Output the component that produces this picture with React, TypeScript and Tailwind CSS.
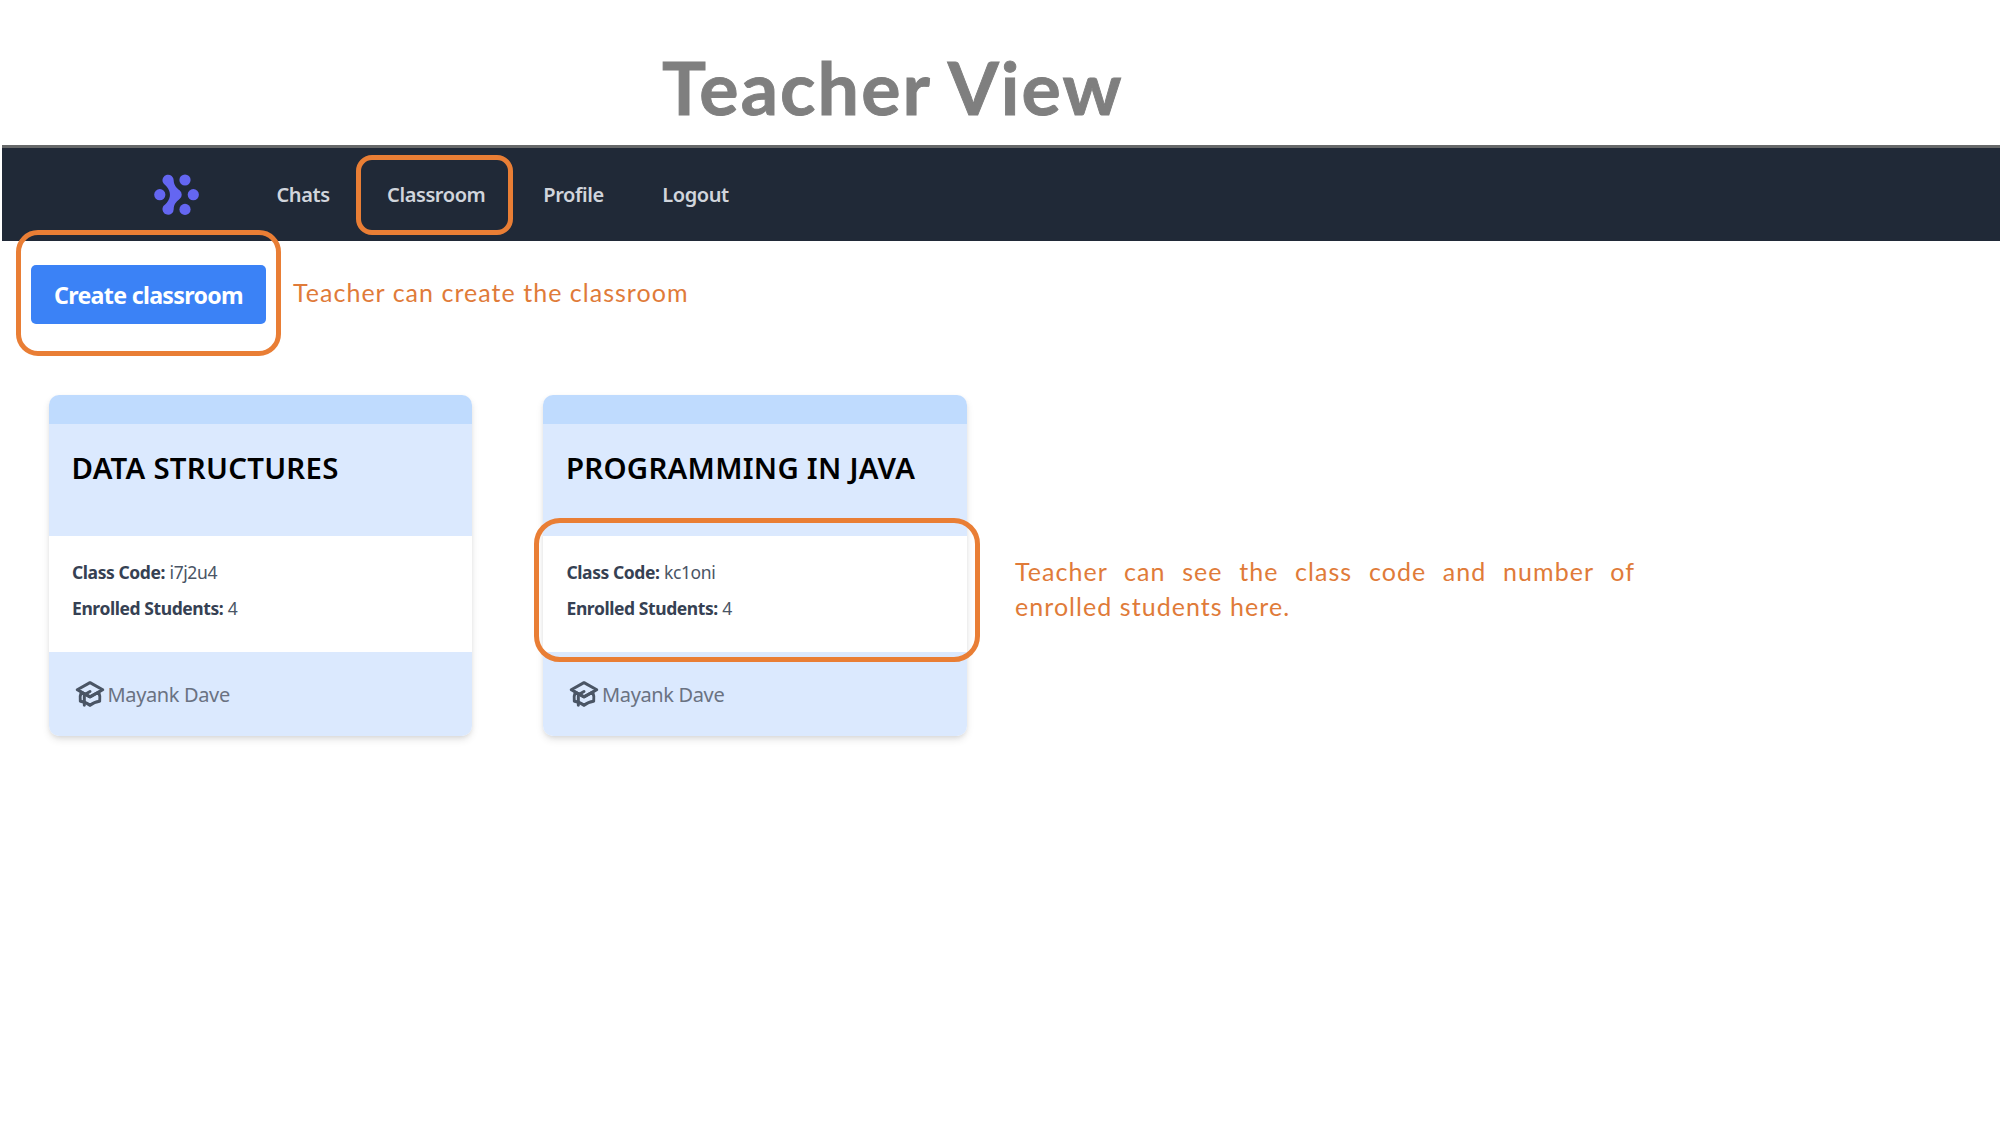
import type { ReactNode } from "react";

function Highlight({ className }: { className: string }) {
  return (
    <span
      aria-hidden="true"
      className={`pointer-events-none absolute z-10 border-5 border-[#e97e35] ${className}`}
    />
  );
}

function Logo() {
  return (
    <svg viewBox="0 0 46 42" className="h-[42px] w-[46px] shrink-0 text-[#6466f1]" fill="currentColor">
      <circle cx="5.8" cy="20.7" r="5.6" />
      <circle cx="39.3" cy="20.7" r="5.6" />
      <circle cx="31" cy="6" r="5.6" />
      <circle cx="31" cy="35.4" r="5.6" />
      <path d="M9 8.6A5.6 5.6 0 1 1 19.7 6.4C19.9 10.5 21.6 13.2 25.6 16.3A5.6 5.6 0 0 1 25.6 25.1C21.6 28.2 19.9 30.9 19.7 35A5.6 5.6 0 1 1 9 32.8C9.6 31.4 11.3 30.5 12.8 28.7C17 23.8 17 17.6 12.8 12.7C11.3 10.9 9.6 10 9 8.6Z" />
    </svg>
  );
}

function AcademicCap() {
  return (
    <svg
      viewBox="0 0 24 24"
      fill="none"
      stroke="currentColor"
      strokeWidth="2.1"
      strokeLinecap="round"
      strokeLinejoin="round"
      className="size-[34px] shrink-0 text-gray-600"
    >
      <path d="M12 14l9-5-9-5-9 5 9 5z" />
      <path d="M12 14l6.16-3.422a12.083 12.083 0 01.665 6.479A11.952 11.952 0 0012 20.055a11.952 11.952 0 00-6.824-2.998 12.078 12.078 0 01.665-6.479L12 14z" />
      <path d="M8 20v-7.5l4-2.222" />
    </svg>
  );
}

function ClassCard({ name, code, students, teacher, children }: {
  name: string;
  code: string;
  students: number;
  teacher: string;
  children?: ReactNode;
}) {
  return (
    <article className="relative h-[341px] w-[423.5px] shrink-0">
      <div className="flex h-full flex-col overflow-hidden rounded-[10px] bg-white shadow-[0_4px_8px_-1px_rgba(0,0,0,0.12),0_2px_5px_-1px_rgba(0,0,0,0.08)]">
        <div className="h-[29px] bg-[#bfdbfe]" />
        <div className="h-[112px] bg-[#dbe9fe] px-[23px] pt-[24px]">
          <h2 className="text-[29.4px] leading-[40px] font-semibold tracking-[0.25px] whitespace-nowrap text-black">
            {name}
          </h2>
        </div>
        <div className="h-[116px] px-[23.5px] pt-[18px] text-[17.5px] leading-[36px] text-gray-600">
          <p>
            <span className="font-bold tracking-[-0.42px] text-gray-700">Class Code:</span>
            <span className="ml-[4.5px] tracking-[-0.4px]">{code}</span>
          </p>
          <p>
            <span className="font-bold tracking-[-0.42px] text-gray-700">Enrolled Students:</span>
            <span className="ml-[4.5px]">{students}</span>
          </p>
        </div>
        <div className="flex flex-1 items-center bg-[#dbe9fe] pl-[24px] text-[20px] tracking-[-0.36px] text-gray-500">
          <AcademicCap />
          <span className="ml-px pt-[2px]">{teacher}</span>
        </div>
      </div>
      {children}
    </article>
  );
}

export default function App() {
  return (
    <div className="h-[1125px] w-[2000px] overflow-hidden bg-white font-['Noto_Sans',sans-serif]">
      <header className="h-[145px] pt-[42px] pl-[662px]">
        <h1 className="font-['Lato',sans-serif] text-[73.5px] leading-[90px] font-bold tracking-[2.1px] text-[#7f7f7f] [-webkit-text-stroke:0.9px_#7f7f7f]">
          Teacher View
        </h1>
      </header>

      <nav className="ml-[2px] flex h-[96px] items-center border-t-3 border-[#666869] bg-[#202937] pl-[152px] text-[20px] font-semibold tracking-[-0.42px] text-gray-300">
        <Logo />
        <a className="ml-[76.5px]">Chats</a>
        <a className="relative ml-[57.5px]">
          Classroom
          <Highlight className="-top-[25px] -left-[31.5px] h-[80px] w-[157.5px] rounded-[16px]" />
        </a>
        <a className="ml-[58px]">Profile</a>
        <a className="ml-[58.5px]">Logout</a>
      </nav>

      <main>
        <div className="flex h-[153.5px] items-start pt-[24px] pl-[31px]">
          <div className="relative">
            <button className="flex h-[58.5px] w-[235px] items-center justify-center rounded-[5px] bg-[#3b82f6] pt-[2px] text-[23.2px] font-bold tracking-[-0.69px] whitespace-nowrap text-white">
              Create classroom
            </button>
            <Highlight className="-top-[35px] -left-[15px] h-[126px] w-[264.5px] rounded-[22px]" />
          </div>
          <p className="mt-[10px] ml-[27px] font-['Lato',sans-serif] text-[25px] leading-[35px] tracking-[1.03px] text-[#e07b39]">
            Teacher can create the classroom
          </p>
        </div>

        <div className="flex items-start pl-[48.5px]">
          <ClassCard name="DATA STRUCTURES" code="i7j2u4" students={4} teacher="Mayank Dave" />
          <div className="ml-[71px] shrink-0">
            <ClassCard name="PROGRAMMING IN JAVA" code="kc1oni" students={4} teacher="Mayank Dave">
              <Highlight className="top-[123px] -left-[9.5px] h-[144.5px] w-[446px] rounded-[26px]" />
            </ClassCard>
          </div>
          <p className="mt-[159.5px] ml-[48.5px] w-[620px] text-justify font-['Lato',sans-serif] text-[25px] leading-[35px] tracking-[1.05px] text-[#e07b39]">
            Teacher can see the class code and number of enrolled students here.
          </p>
        </div>
      </main>
    </div>
  );
}
